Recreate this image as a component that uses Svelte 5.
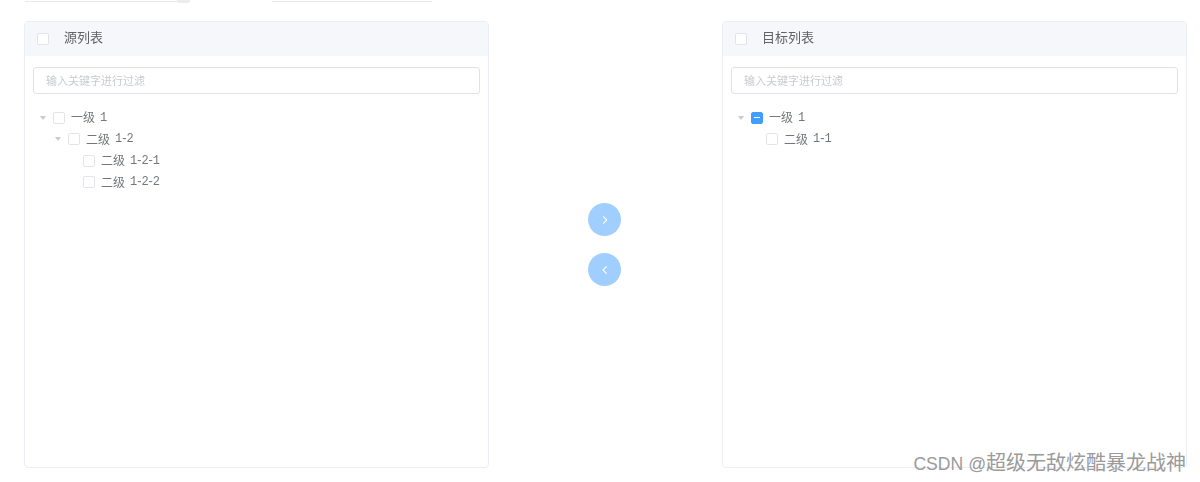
<script>
  const left = [
    { depth: 0, arrow: true, label: '一级', num: '1' },
    { depth: 1, arrow: true, label: '二级', num: '1-2' },
    { depth: 2, arrow: false, label: '二级', num: '1-2-1' },
    { depth: 2, arrow: false, label: '二级', num: '1-2-2' }
  ];
  const right = [
    { depth: 0, arrow: true, label: '一级', num: '1', partial: true },
    { depth: 1, arrow: false, label: '二级', num: '1-1' }
  ];
  const panels = [
    { title: '源列表', rows: left },
    { title: '目标列表', rows: right }
  ];
</script>

{#snippet panel(p)}
  <section class="panel">
    <header class="head">
      <span class="box"></span>
      <span class="title">{p.title}</span>
    </header>
    <div class="body">
      <div class="filter">输入关键字进行过滤</div>
      <ul class="tree">
        {#each p.rows as r}
          <li class="row depth-{r.depth}">
            <span class="caret" class:hidden={!r.arrow}></span>
            <span class="box" class:partial={r.partial}></span>
            <span class="label">{r.label}</span>
            <span class="num">{r.num}</span>
          </li>
        {/each}
      </ul>
    </div>
  </section>
{/snippet}

<div class="page">
  <div class="blurred">
    <div class="top">
      <div class="stub first"></div>
      <div class="stub second"></div>
    </div>
    <main class="transfer">
      {@render panel(panels[0])}
      <div class="actions">
        <button class="round" aria-label="to right">
          <svg viewBox="0 0 10 10" width="10" height="10"><path d="M3.2 1.4 6.8 5 3.2 8.6" /></svg>
        </button>
        <button class="round" aria-label="to left">
          <svg viewBox="0 0 10 10" width="10" height="10"><path d="M6.6 1.4 3 5 6.6 8.6" /></svg>
        </button>
      </div>
      {@render panel(panels[1])}
    </main>
  </div>
  <div class="mark"><span class="latin">CSDN @</span>超级无敌炫酷暴龙战神</div>
</div>

<style>
  :global(body) {
    margin: 0;
    background: #fff;
  }
  .page {
    position: relative;
    width: 1200px;
    height: 482px;
    overflow: hidden;
    font-family: "Noto Sans CJK SC", "Liberation Sans", sans-serif;
    color: #606266;
  }
  .blurred {
    filter: blur(0.4px);
  }
  .top {
    display: flex;
    height: 2px;
    padding-left: 25px;
    gap: 82px;
  }
  .stub {
    box-sizing: border-box;
    position: relative;
    height: 2px;
    border-bottom: 1px solid #e8eaee;
  }
  .first {
    width: 165px;
  }
  .first::after {
    content: "";
    position: absolute;
    right: 0;
    top: 0;
    width: 13px;
    height: 3px;
    border-radius: 0 0 6px 6px;
    background: #ececec;
  }
  .second {
    width: 160px;
  }
  .transfer {
    display: flex;
    padding: 19px 13px 0 24px;
  }
  .panel {
    box-sizing: border-box;
    width: 465px;
    height: 447px;
    border: 1px solid #ebeef5;
    border-radius: 4px;
    overflow: hidden;
  }
  .head {
    display: flex;
    align-items: center;
    box-sizing: border-box;
    height: 34px;
    padding-left: 12px;
    background: #f5f7fa;
  }
  .title {
    margin-left: 15px;
    padding-bottom: 4px;
    font-size: 13px;
    line-height: 20px;
    color: #606266;
  }
  .box {
    box-sizing: border-box;
    flex: none;
    display: block;
    position: relative;
    width: 12px;
    height: 12px;
    border: 1px solid #e2e4ea;
    border-radius: 2px;
    background: #fff;
  }
  .partial {
    background: #409eff;
    border-color: #409eff;
  }
  .partial::after {
    content: "";
    position: absolute;
    left: 2px;
    right: 2px;
    top: 4px;
    height: 1.5px;
    background: #fff;
  }
  .body {
    padding: 11px 8px 0;
  }
  .filter {
    box-sizing: border-box;
    height: 27px;
    padding-left: 12px;
    border: 1px solid #dfe2e8;
    border-radius: 3px;
    font-size: 11px;
    line-height: 25px;
    color: #c8cbd2;
  }
  .tree {
    list-style: none;
    margin: 13px 0 0;
    padding: 0;
  }
  .row {
    display: flex;
    align-items: center;
    height: 21.5px;
    font-size: 12px;
  }
  .depth-0 {
    padding-left: 7px;
  }
  .depth-1 {
    padding-left: 22px;
  }
  .depth-2 {
    padding-left: 37px;
  }
  .caret {
    flex: none;
    width: 0;
    height: 0;
    margin-right: 7px;
    border-left: 3.5px solid transparent;
    border-right: 3.5px solid transparent;
    border-top: 4px solid #c8cbd2;
  }
  .caret.hidden {
    border-top-color: transparent;
  }
  .label {
    margin-left: 6px;
    padding-bottom: 2px;
    color: #73767c;
  }
  .num {
    margin-left: 5px;
    font-family: "Liberation Mono", monospace;
    font-size: 12px;
    letter-spacing: -1.5px;
    color: #73767c;
  }
  .actions {
    flex: none;
    display: flex;
    flex-direction: column;
    align-items: center;
    gap: 17px;
    box-sizing: border-box;
    width: 233px;
    padding: 182px 2px 0 0;
  }
  .round {
    box-sizing: border-box;
    display: flex;
    align-items: center;
    justify-content: center;
    width: 33px;
    height: 33px;
    padding: 0;
    border: 0;
    border-radius: 50%;
    background: #a0cfff;
  }
  .round path {
    fill: none;
    stroke: #fff;
    stroke-width: 1.1;
  }
  .mark {
    position: absolute;
    right: 14px;
    bottom: 6px;
    font-family: "Noto Sans CJK SC", "Liberation Sans", sans-serif;
    font-size: 20px;
    line-height: 24px;
    color: #9a9a9a;
    white-space: nowrap;
  }
  .latin {
    font-family: "Liberation Sans", sans-serif;
    font-size: 17.6px;
  }
</style>
